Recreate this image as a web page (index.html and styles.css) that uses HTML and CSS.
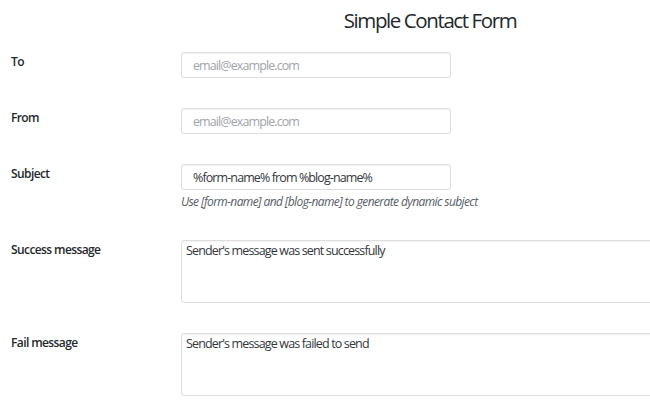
FILE: index.html
```html
<!doctype html>
<html lang="en">
  <head>
    <meta charset="UTF-8" />
    <meta name="viewport" content="width=device-width, initial-scale=1.0" />
    <title>Simple Contact Form</title>
    <link rel="stylesheet" href="styles.css">
  </head>
  <body>
    <div class="wrap">
      <h1 class="page-title">Simple Contact Form</h1>

      <form class="form-table">
        <div class="row">
          <label class="row-label" for="to">To</label>
          <div class="row-field">
            <input id="to" class="text-input" type="email" placeholder="email@example.com" />
          </div>
        </div>

        <div class="row">
          <label class="row-label" for="from">From</label>
          <div class="row-field">
            <input id="from" class="text-input" type="email" placeholder="email@example.com" />
          </div>
        </div>

        <div class="row">
          <label class="row-label" for="subject">Subject</label>
          <div class="row-field">
            <input id="subject" class="text-input" type="text" value="%form-name% from %blog-name%" />
            <p class="description">Use [form-name] and [blog-name] to generate dynamic subject</p>
          </div>
        </div>

        <div class="row">
          <label class="row-label" for="success">Success message</label>
          <div class="row-field">
            <textarea id="success" class="text-area">Sender's message was sent successfully</textarea>
          </div>
        </div>

        <div class="row">
          <label class="row-label" for="fail">Fail message</label>
          <div class="row-field">
            <textarea id="fail" class="text-area">Sender's message was failed to send</textarea>
          </div>
        </div>
      </form>
    </div>
  </body>
</html>
```

FILE: styles.css
```css
html,
body {
  margin: 0;
  overflow: hidden;
  background: #ffffff;
}
body {
  font-family: "Open Sans", "Liberation Sans", sans-serif;
  color: #23282d;
}
.wrap {
  width: 860px;
}
.page-title {
  margin: 0;
  padding-top: 6px;
  text-align: center;
  font-size: 20.5px;
  font-weight: 400;
  letter-spacing: -1.4px;
  line-height: 29px;
  color: #23282d;
}
.form-table {
  display: flex;
  flex-direction: column;
  gap: 30px;
  margin-top: 17px;
}
.row {
  display: grid;
  grid-template-columns: 181px 1fr;
}
.row-label {
  padding: 1px 0 0 11px;
  font-size: 12px;
  font-weight: 600;
  letter-spacing: -0.6px;
  line-height: 18px;
  color: #23282d;
}
.row-field {
  display: flex;
  flex-direction: column;
  align-items: flex-start;
}
.text-input {
  box-sizing: border-box;
  width: 270px;
  height: 26px;
  margin: 0;
  padding: 0 11px;
  border: 1px solid #dddddd;
  border-radius: 3px;
  box-shadow: inset 0 1px 2px rgba(0, 0, 0, 0.05);
  font-family: inherit;
  font-size: 12.5px;
  letter-spacing: -0.9px;
  color: #32373c;
  background: #ffffff;
}
.text-input::placeholder {
  color: #a0a5aa;
}
.description {
  margin: 4px 0 0;
  font-size: 12px;
  font-style: italic;
  letter-spacing: -0.6px;
  line-height: 16px;
  color: #555d66;
}
.text-area {
  box-sizing: border-box;
  width: 560px;
  height: 63px;
  margin: 0;
  padding: 1px 4px;
  border: 1px solid #dddddd;
  border-radius: 3px;
  box-shadow: inset 0 1px 2px rgba(0, 0, 0, 0.05);
  font-family: inherit;
  font-size: 12.5px;
  letter-spacing: -0.85px;
  line-height: 18px;
  color: #32373c;
  background: #ffffff;
  resize: none;
}
```
